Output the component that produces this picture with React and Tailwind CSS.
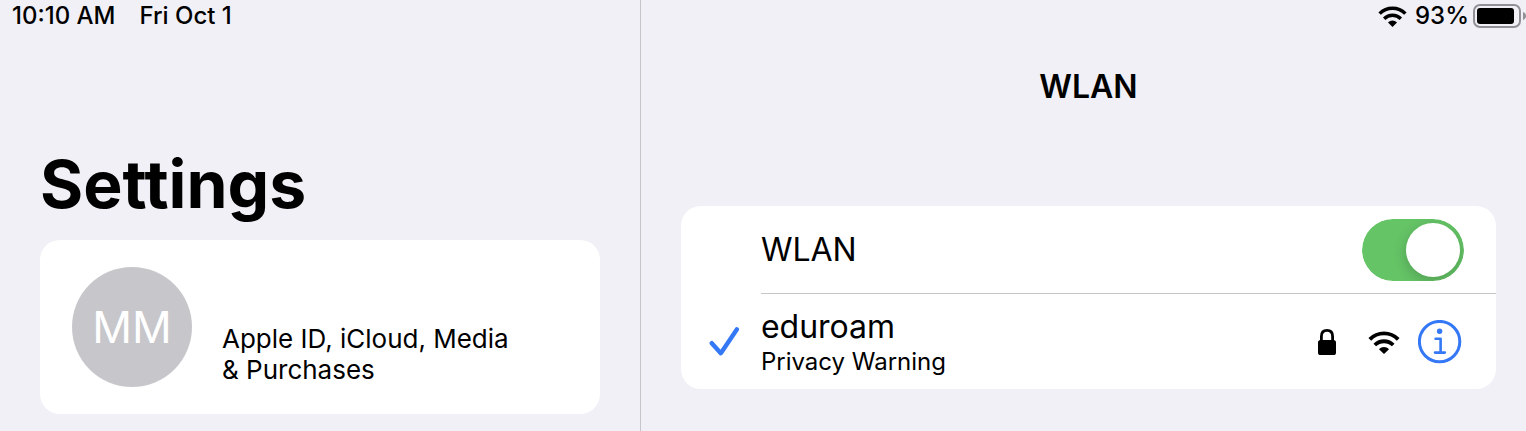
function WifiIcon({ className }) {
    return (
        <svg viewBox="0 0 32 24" className={className} aria-hidden="true" fill="none" stroke="currentColor" strokeWidth="3.8">
            <path d="M1.8 9.4C9.6 1.4 22.4 1.4 30.2 9.4" />
            <path d="M6.8 15c5.2-5 13.2-5 18.4 0" />
            <path d="M16 24l-5-4.8c2.8-3 7.2-3 10 0z" fill="currentColor" stroke="none" />
        </svg>
    );
}

function BatteryIcon() {
    return (
        <svg viewBox="0 0 53 24" className="h-6 w-[53px] shrink-0" aria-hidden="true">
            <rect x="1" y="1" width="46" height="22" rx="6" fill="none" stroke="#919095" strokeWidth="2" />
            <rect x="4" y="4" width="37" height="16" rx="3" fill="#000" />
            <path d="M50 8c2.2 0.8 3 2.2 3 4s-0.8 3.2-3 4z" fill="#919095" />
        </svg>
    );
}

function LockIcon() {
    return (
        <svg viewBox="0 0 20 28" className="h-7 w-5" aria-hidden="true">
            <rect x="1" y="12" width="18" height="15" rx="2.6" fill="#000" />
            <path d="M4.4 13V8.4C4.4 4.4 6.8 2.4 10 2.4s5.6 2 5.6 6V13" fill="none" stroke="#000" strokeWidth="2.8" />
        </svg>
    );
}

function CheckIcon() {
    return (
        <svg viewBox="0 0 32 32" className="h-8 w-8 shrink-0" aria-hidden="true">
            <path d="M4.8 17.2l9 10L29.8 3.4" fill="none" stroke="#3478f6" strokeWidth="4.4" strokeLinecap="round" strokeLinejoin="round" />
        </svg>
    );
}

function InfoIcon() {
    return (
        <svg viewBox="0 0 44 44" className="h-11 w-11" aria-hidden="true" fill="none" stroke="#3478f6">
            <circle cx="21.6" cy="21.6" r="20.2" strokeWidth="3" />
            <circle cx="21.6" cy="11.2" r="2.7" fill="#3478f6" stroke="none" />
            <path d="M17.6 18.8h5v13.6M17 32.6h9.8" strokeWidth="2.6" strokeLinecap="round" strokeLinejoin="round" />
        </svg>
    );
}

function Sidebar() {
    return (
        <aside className="flex w-[42%] flex-col border-r border-[#c6c6c8]">
            <div className="flex h-8 items-center gap-6 pl-3 text-2xl font-medium">
                <span>10:10 AM</span>
                <span>Fri Oct 1</span>
            </div>

            <div className="px-10 pt-28">
                <h1 className="text-[66px] leading-20 font-bold">Settings</h1>

                {/* Account card */}
                <a href="#account" className="mt-4 flex items-center gap-[30px] rounded-[20px] bg-white px-8 py-[27px]">
                    <span className="flex h-30 w-30 shrink-0 items-center justify-center rounded-full bg-[#c7c6cb] text-[44px] text-white">
                        MM
                    </span>
                    <span className="max-w-[300px] self-end pb-0.5 text-[26px] leading-[31px]">
                        Apple ID, iCloud, Media &amp; Purchases
                    </span>
                </a>
            </div>
        </aside>
    );
}

function WlanPanel() {
    return (
        <main className="min-w-0 flex-1">
            <div className="flex h-8 items-center justify-end gap-2 text-2xl font-medium">
                <WifiIcon className="h-[22px] w-[29px]" />
                <span className="flex items-center gap-1">
                    93%
                    <BatteryIcon />
                </span>
            </div>

            <div className="pr-[30px] pl-10">
                <h2 className="mt-8 mb-24 text-center text-[32px] leading-[46px] font-semibold">WLAN</h2>

                <div className="rounded-[20px] bg-white pl-20">
                    <label className="flex h-22 items-center justify-between border-b border-[#c6c6c8] pr-8 text-[32px]">
                        WLAN
                        {/* Knob shadow stays inside the track */}
                        <span className="relative flex overflow-hidden rounded-full">
                            <input
                                type="checkbox"
                                defaultChecked
                                className="peer h-[62px] w-[102px] appearance-none rounded-full bg-[#e9e9ea] checked:bg-[#65c466]"
                            />
                            <span className="pointer-events-none absolute top-1 left-1 h-[54px] w-[54px] rounded-full bg-white shadow-[0_4px_14px_rgba(0,0,0,0.2)] peer-checked:right-1 peer-checked:left-auto" />
                        </span>
                    </label>

                    {/* Connected network */}
                    <div className="-ml-[54px] flex h-[95px] items-center gap-[22px] pr-[34px]">
                        <CheckIcon />
                        <div className="flex-1">
                            <p className="text-[32px] leading-10">eduroam</p>
                            <p className="text-2xl leading-[30px]">Privacy Warning</p>
                        </div>
                        <div className="flex items-center">
                            <LockIcon />
                            <WifiIcon className="mr-[18px] ml-[31px] h-6 w-8" />
                            <button type="button" aria-label="Network details">
                                <InfoIcon />
                            </button>
                        </div>
                    </div>
                </div>
            </div>
        </main>
    );
}

export default function App() {
    return (
        <div className="flex min-h-screen bg-[#f1f0f6] font-['Inter',sans-serif] text-black">
            <Sidebar />
            <WlanPanel />
        </div>
    );
}
